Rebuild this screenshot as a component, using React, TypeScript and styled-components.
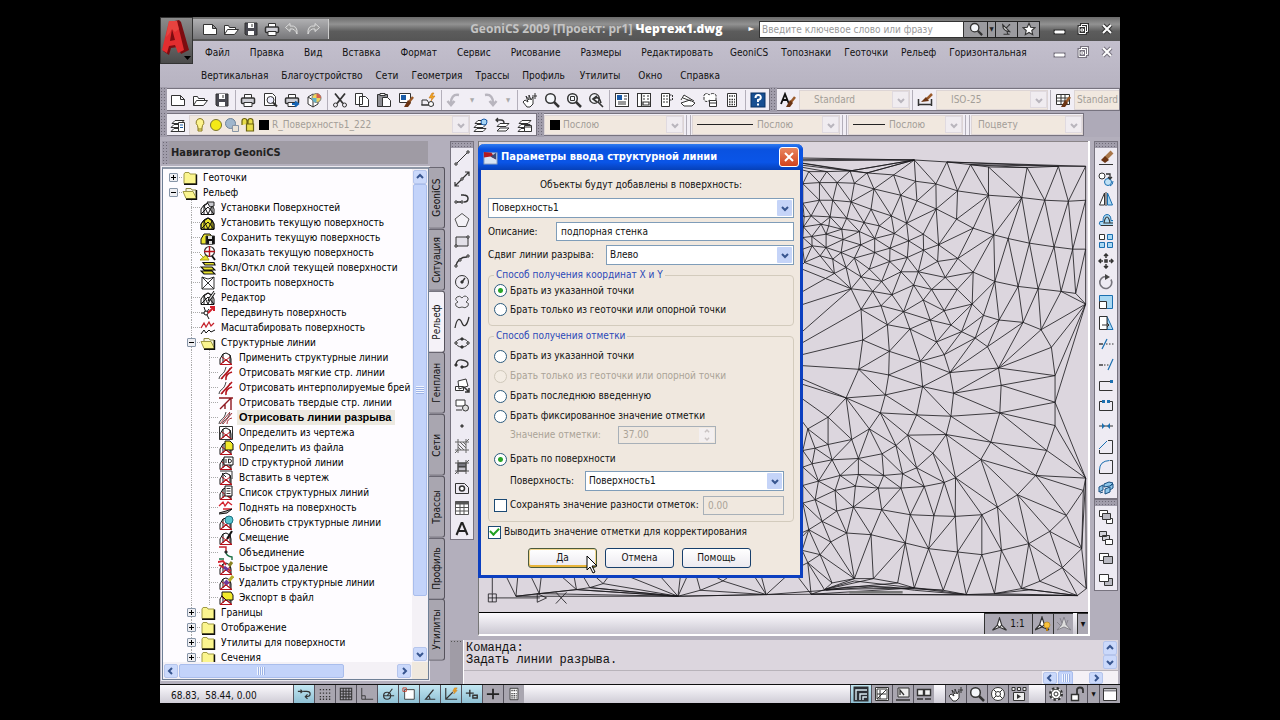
import React, { useState } from "react";
import type { ReactNode } from "react";
import styled, { createGlobalStyle, css } from "styled-components";

const ui = `"DejaVu Sans Condensed", "DejaVu Sans", sans-serif`;

const Global = createGlobalStyle`
  * { box-sizing: border-box; }
  html, body { margin: 0; background: #000; }
  body { font: 10px/14px ${ui}; color: #111; }
  button, input, select { font: inherit; color: inherit; margin: 0; padding: 0; border-radius: 0; }
`;

/* ---------- icons, all on a 16 x 16 grid ---------- */

const surf = <path d="M1 14.500V9L4 5l4-2 4 2 2 4v5.500zM4 14V6l4 8 4-8v8M4 6l4-3 4 3M1 14l7-7 6 7" stroke="#111" />;
const surfRed = (
  <>
    <path d="M2 14.500V9l3-5 3-1 4 2 1 4v5.500M5 13V4M12 13V5" stroke="#111" />
    <path d="M2 14.500h12l-6-5zM4 7l9 7M12 7l-9 7" stroke="#b5121b" />
  </>
);
const page = <path d="M1.500 3.500h9l4 4v6h-13zM10.500 3.500v4h4" fill="#fff" />;
const folderOpen = <path d="M1.500 13.500v-9h4l1 2h6v2M1.500 13.500l3-5h11l-4 5z" fill="#fff" />;
const floppy = (
  <>
    <path d="M2 2h12v12H3l-1-1z" fill="#4a4a52" />
    <path d="M5 2h6v5H5zM5 10h6v4H5z" fill="#fff" stroke="none" />
    <path d="M9 3v3" />
  </>
);
const printer = (
  <>
    <path d="M4.500 6V2.500h7V6" fill="#fff" />
    <rect x="1.500" y="6" width="13" height="5.500" rx="1" fill="#cfcfd6" strokeWidth="1.500" />
    <path d="M4 10.500h8v4H4z" fill="#fff" />
  </>
);
const lens = (
  <>
    <circle cx="6.500" cy="6.500" r="4.800" fill="#f4f6fa" strokeWidth="1.500" />
    <path d="M10 10l5 5" strokeWidth="2.500" />
  </>
);
const layers = <path d="M5 3.500h9l-3 3H2zM4 7.500h9l-3 3H1zM4 11.500h9l-3 3H1z" fill="#fff" />;
const brush = (
  <>
    <path d="M15 5l-4 5" stroke="#9a5a2a" strokeWidth="2.500" />
    <path d="M10 8l3 3-3 4-4 0z" fill="#6b3414" stroke="none" />
  </>
);
const hand = <path d="M3 8l3 2-2-6 3 4V3l2 5 2-3v7l-3 3H5L1 10zM10 4h5M13 1v6" fill="#fff" />;
const nodes = (x1: number, y1: number, x2: number, y2: number) => (
  <path d={`M${x1 - 1} ${y1 - 1}h2v2h-2zM${x2 - 1} ${y2 - 1}h2v2h-2z`} fill="#fff" />
);
const contours = <path d="M1 14c1-6 5-3 7-12M4 14c2-5 5-3 8-11" stroke="#111" strokeWidth=".8" />;

const glyphs: Record<string, ReactNode> = {
  new: page,
  open: folderOpen,
  save: floppy,
  print: printer,
  undo: <path d="M6 2.500L1.500 6.500 6 10.500V8q5-1 7 5 1-9-7-8z" fill="#999" stroke="#ddd" />,
  redo: <path d="M10 2.500l4.500 4-4.500 4V8q-5-1-7 5-1-9 7-8z" fill="#999" stroke="#ddd" />,
  preview: <><path d="M2.500 1.500h8l3 3v9h-11z" fill="#fff" /><circle cx="8.500" cy="8" r="3.500" fill="#eef" /><path d="M11 10.500l4 4" strokeWidth="2" /></>,
  publish: <>{printer}<path d="M8 12h5M11 9.500l3 2.500-3 2.500" stroke="#1565b5" strokeWidth="2" /></>,
  dwf: <><path d="M2 5l5-3 5 3v7l-5 3-5-3zM2 5l5 3v7" fill="#fff" /><circle cx="10.500" cy="6" r="4.500" fill="#ecd55e" stroke="#777" /><path d="M10.500 1.500A4.500 4.500 0 0115 6h-4.500z" fill="#d6604f" stroke="none" /><path d="M10.500 6v4.500A4.500 4.500 0 016 6z" fill="#62b1c9" stroke="none" /></>,
  cut: <><path d="M3 1.500l8 10M13 1.500l-8 10" strokeWidth="1.800" /><circle cx="3.500" cy="13" r="2" /><circle cx="12.500" cy="13" r="2" /></>,
  copy: <path d="M1.500 1.500h7v11h-7zM5.500 4.500h6l3 3v7h-9z" fill="#fff" />,
  paste: <><path d="M1.500 2.500h10v12h-10z" fill="#8c8c92" /><path d="M4 1.500h5v2H4z" fill="#fff" /><path d="M6.500 5.500h5l3 3v6h-8z" fill="#fff" /></>,
  match: <><path d="M1.500 1.500h11v9h-11z" fill="#fff" /><path d="M3 3h5v5H3z" fill="#1b5ca8" stroke="none" />{brush}</>,
  block: <><path d="M2 13V8h5l3 5zM1 13h13" /><circle cx="11" cy="12" r="2.500" fill="#fff" /><path d="M12 1l-3 5h3l-1 3 4-5h-3l2-3z" fill="#f0a520" stroke="#c9771a" strokeWidth=".6" /></>,
  arcL: <path d="M13 3C7 2 5 6 5 11M1.500 9L5 13l3.500-4" stroke="#b8b5be" strokeWidth="2.500" />,
  arcR: <path d="M3 3c6-1 8 3 8 8M7.500 9l3.500 4 3.500-4" stroke="#b8b5be" strokeWidth="2.500" />,
  pan: hand,
  zoom: lens,
  zoomWin: <>{lens}<path d="M4.500 4.500h4v4h-4z" /></>,
  zoomPrev: <><circle cx="6.500" cy="6.500" r="4.800" fill="#f4f6fa" strokeWidth="1.300" /><path d="M6 7q5-4 7 4M9 4L5 7l4 3M10 10l5 5" strokeWidth="1.600" /></>,
  props: <><rect x="1.500" y="1.500" width="13" height="13" fill="#fff" /><path d="M3 3h5v5H3z" fill="#1b5ca8" stroke="none" /><path d="M10 4h3M10 7h3M4 10h8M4 12h8" /></>,
  center: <><rect x="1.500" y="1.500" width="13" height="13" fill="#fff" /><path d="M5.500 2v12M7 4h2M11 4h2M7 7h2M11 7h2M7 10h6v3H7z" strokeWidth="1.200" /></>,
  palettes: <><path d="M3.500 1.500h8v13h-8z" fill="#fff" /><path d="M5 4h5M5 7h5M5 10h5M11.500 3h3v5h-3" strokeDasharray="2 1" /></>,
  sheetset: <path d="M1 11l9-3 5 3-3 3H4zM1 8l3-5 10 6M3 6l8 3" fill="#fff" />,
  markup: <><path d="M2 3q3-3 5 0 4-3 7 0v5q-4 3-6 0-4 3-6 0z" fill="#fff" strokeDasharray="3 1" /><path d="M7.500 8.500h7v6h-7zM7 11h8" fill="#fff" /></>,
  calc: <><path d="M3.500 1.500h9v13h-9z" fill="#fff" /><path d="M5 4h6M5 7.500h6M5 10h6M5 12.500h6" strokeDasharray="1.500 1" strokeWidth="1.500" /></>,
  help: <><rect x="1" y="1" width="14" height="14" fill="#174f92" stroke="#0b3266" /><path d="M5.500 6q0-3 2.700-3t2.600 2.500Q10.800 7.500 8 8v2M8 11.500v2" stroke="#fff" strokeWidth="2" /></>,
  textStyle: <><path d="M1 12L5 2l4 10M3 8h5" stroke="#111" strokeWidth="1.800" />{brush}</>,
  dimStyle: <><path d="M1.500 7v7M14.500 7v7M2 12.500h12" strokeWidth="1.500" /><path d="M15 2l-5 5" stroke="#9a5a2a" strokeWidth="2.500" /><path d="M9 5l3 4-8 1z" fill="#6b3414" stroke="none" /></>,
  tableStyle: <><path d="M1.500 2.500h13v10h-13zM1.500 6h13M1.500 9h13M6 3v9M10 3v9" fill="#fff" />{brush}</>,
  layerProps: <>{layers}<path d="M8.500 5.500h6v9h-6z" fill="#fff" /><path d="M10 8h3M10 10.500h3" stroke="#1b5ca8" /></>,
  bulb: <path d="M8 1.500a4 4 0 00-2.500 7L6 11v3h4v-3l.500-2.500A4 4 0 008 1.500zM6 12h4" fill="#fdf38c" stroke="#8a7a20" />,
  sun: <circle cx="8" cy="8" r="5.500" fill="#f4ea16" stroke="#7a7430" />,
  freeze: <><circle cx="6.500" cy="6.500" r="5" fill="#9fb6cc" stroke="#6c8299" /><path d="M8.500 8.500h6v6h-6z" fill="#e9e2d6" stroke="#8895a5" /></>,
  lock: <path d="M2 8V4a2.500 2.500 0 015 0v3M6.500 7h7v7h-7zM8 7V4a2.500 2.500 0 015 0v3" fill="#e8dc4a" stroke="#6a6312" strokeWidth="1.200" />,
  black: <path d="M3 3h10v10H3z" fill="#000" stroke="none" />,
  layerCur: <>{layers}<circle cx="11" cy="5" r="3" fill="#a7d4f3" stroke="#1b5ca8" /></>,
  layerPrev: <><path d="M5 6.500h9l-3 3H2zM5 11h9l-3 3H2z" fill="#fff" /><path d="M1 3h5q3 0 3 3M3 1L1 3l2 2" strokeWidth="1.300" /></>,
  layerState: <>{layers}<path d="M7.500 8.500h7v6h-7zM7.500 10h7" fill="#fff" /></>,

  line: <><path d="M2 14L14 2" />{nodes(2, 14, 14, 2)}</>,
  xline: <><path d="M1 15L15 1M15 5V1h-4M1 11v4h4" strokeWidth="1.200" /><path d="M7 7h2v2H7z" fill="#fff" /></>,
  pline: <><path d="M2 11h7M9 4q5 0 5 3.500T10 11M7 4h3" strokeWidth="1.500" />{nodes(2, 11, 8, 11)}</>,
  polygon: <path d="M8 1.500L15 7l-3 7.500H4L1 7z" fill="#f3f1f6" stroke="#555" />,
  rect: <><path d="M2 4h12v9H2z" fill="#e2e0e8" />{nodes(2, 13, 14, 4)}</>,
  arc: <><path d="M2 13q2-9 11-9" strokeWidth="1.300" />{nodes(2, 13, 14, 3)}<path d="M5 6h2v2H5z" fill="#fff" /></>,
  circle: <><circle cx="8" cy="8" r="6.500" /><path d="M8 8l3-4" strokeWidth="1.400" /><path d="M7 7h2v2H7z" fill="#333" /></>,
  cloud: <path d="M8 4q3-4 6 0 1 2-2 4 4 1 2 4-3 3-6 1-3 2-6-1-2-3 2-4-4-3-1-5 3-2 5 1z" stroke="#555" />,
  spline: <path d="M1 13C3 2 6 3 8 8s5 3 7-6" strokeWidth="1.300" />,
  ellipse: <><ellipse cx="8" cy="8" rx="6" ry="4" />{nodes(2, 8, 14, 8)}<path d="M7 3h2v2H7zM7 11h2v2H7z" fill="#333" /></>,
  ellArc: <><path d="M2 8q1-5 6-4 6 1 6 4t-5 3" strokeWidth="1.400" /><path d="M7 10h2v2H7zM1 8h2v2H1z" fill="#333" /></>,
  insert: <><path d="M4 4l8-2 2 7-9 3zM1.500 9.500h8v4h-8z" fill="#fff" /><path d="M10 10l5 5M15 11v4h-4" strokeWidth="1.500" /></>,
  make: <><path d="M2 3h9v6H2z" fill="#fff" /><path d="M2 13h6" /><circle cx="11.500" cy="11" r="3" fill="#ddd" /></>,
  point: <path d="M7 7h2v2H7z" fill="#777" />,
  hatch: <path d="M1 4h14M1 12h14M4 1v14M12 1v14M4 6l6 6M4 9l3 3M6 4l6 6M9 4l3 3M15 1l-3 3M4 12l-3 3" stroke="#666" />,
  gradient: <><path d="M4 4h8v4H4z" fill="#77777f" /><path d="M4 8h8v4H4z" fill="#c4c2ca" /><path d="M1 4h14M1 12h14M4 1v14M12 1v14M15 1l-3 3M4 12l-3 3" stroke="#555" /></>,
  region: <><path d="M1.500 3.500h9l4 4v6h-13z" /><circle cx="8" cy="8.500" r="2.500" fill="#fff" strokeWidth="1.500" /></>,
  table: <><path d="M1.500 1.500h13v13h-13zM1.500 7.500h13M1.500 11h13M6 4v10M10 4v10" fill="#fff" stroke="#555" /><path d="M1 3h14" stroke="#555" strokeWidth="3" /></>,
  mtext: <path d="M2.500 14L7.500 2h1l5 12M4.500 10h7" stroke="#222" strokeWidth="2" />,

  erase: <><path d="M14 2L8 8" stroke="#a8764a" strokeWidth="4" /><path d="M7 6l4 4-4 3-4-3z" fill="#6b3414" stroke="none" /><path d="M1 14.500h14" /></>,
  copyObj: <><circle cx="4" cy="5" r="3" fill="#fff" /><circle cx="10" cy="11" r="3.500" fill="#bfe0f5" stroke="#1b6fb0" /><path d="M8 3h4v4M10 6l2 2 2-2" strokeWidth="1.300" /><path d="M15 10q0 4-3 5" stroke="#1b6fb0" /></>,
  mirror: <><path d="M6.500 2v12h-5zM8 1v14" fill="#fff" /><path d="M9.500 2v12h5z" fill="#a9d8f3" stroke="#1b6fb0" /></>,
  offset: <><path d="M15 13.500H3q-3-1-1-4h3q0-7 4-7t4 6h2" fill="#a9d8f3" stroke="#1b6fb0" /><path d="M15 11H6q1-6 3-6t3 6M3 13.500h12" strokeWidth="1.200" /></>,
  array: <><path d="M1.500 1.500h5v5h-5z" fill="#fff" /><path d="M9.500 1.500h5v5h-5zM1.500 9.500h5v5h-5zM9.500 9.500h5v5h-5z" fill="#a9d8f3" stroke="#1b6fb0" /></>,
  move: <path d="M8 1v4M8 11v4M1 8h4M11 8h4M6 3l2-2 2 2M6 13l2 2 2-2M3 6L1 8l2 2M13 6l2 2-2 2M7 7h2v2H7z" strokeWidth="1.500" />,
  rotate: <><path d="M8 2.500a6 6 0 105 3" stroke="#77757d" strokeWidth="1.600" /><path d="M7 0l5 3-5 3z" fill="#444" stroke="none" /></>,
  scale: <><path d="M1.500 1.500h13v13h-13z" fill="#a9d8f3" stroke="#1b6fb0" /><path d="M1.500 7.500h7v7h-7z" fill="#fff" /></>,
  stretch: <><path d="M9 1.500l6 13H9z" fill="#a9d8f3" stroke="#1b6fb0" /><path d="M1.500 1.500H9v13H1.500zM4 10h7M9 8l2 2-2 2" fill="#fff" /></>,
  trim: <><path d="M1 8h4" strokeWidth="1.400" /><path d="M8 8h8" strokeDasharray="1.500 1.500" /><path d="M4 13l5-10" stroke="#1b6fb0" strokeWidth="1.200" /></>,
  extend: <><path d="M1 9h4" strokeWidth="1.400" /><path d="M6 9h5" strokeDasharray="1.500 1.500" /><path d="M10 14l5-11" stroke="#1b6fb0" strokeWidth="1.200" /></>,
  breakPt: <><path d="M1.500 13.500v-9h11M1.500 13.500h13" /><path d="M12 3h3v3h-3z" fill="#1b6fb0" stroke="none" /></>,
  breakAt: <><path d="M4 4.500H1.500v9h13v-9H12" /><path d="M4 3h3v3H4zM9 3h3v3H9z" fill="#1b6fb0" stroke="none" /></>,
  join: <><path d="M1 8h14" /><path d="M4 5l3 3-3 3zM12 5L9 8l3 3z" fill="#1b6fb0" stroke="none" /></>,
  chamfer: <><path d="M1.500 11v3.500h13v-13H10" /><path d="M1 10l8-8" stroke="#1b6fb0" /></>,
  fillet: <><path d="M1.500 11v3.500h13v-13H12" /><path d="M1.500 11q0-9 10-9.500" stroke="#1b6fb0" /></>,
  explode: <path d="M1 7l4-2v5l-4 2zM6 4l5-2 4 1-3 3-6 1zM7 9l5-2v5l-5 2zM2 13l3-1M12 6l3-2v4l-3 2" fill="#8cc5ea" stroke="#174f80" />,
  order1: <><path d="M1.500 1.500h8v6h-8zM8.500 9.500h6v5h-6z" fill="#fff" /><path d="M4.500 4.500h8v6h-8z" fill="#b9b9c1" /></>,
  order2: <><path d="M1.500 1.500h7v5h-7zM4.500 5.500h7v5h-7z" fill="#d2d2d8" /><path d="M7.500 9.500h7v5h-7z" fill="#fff" /></>,
  order3: <><path d="M1.500 2.500h9v7h-9z" fill="#fff" /><path d="M5.500 5.500h9v7h-9z" fill="#b9b9c1" /></>,
  order4: <><path d="M6.500 6.500h8v7h-8z" fill="#b9b9c1" /><path d="M1.500 2.500h9v7h-9z" fill="#fff" /></>,

  infer: <path d="M1 5h5M4 3l2 2-2 2M7 5h4q4 0 4 3t-5 3M12 8.500L9.500 11l2.500 2.500" strokeWidth="1.400" />,
  snap: <path d="M2 3h12M2 7h12M2 11h12M2 14h12" strokeDasharray="1.500 2" strokeWidth="1.500" />,
  grid: <path d="M1.500 1.500h13v13h-13zM4.800 2v12M8 2v12M11.300 2v12M2 4.800h12M2 8h12M2 11.300h12" strokeWidth="1.200" />,
  ortho: <path d="M2 1v13h13M2 10h4v4" />,
  polar: <><circle cx="7" cy="10" r="4" strokeWidth="1.400" /><path d="M3 10h12M7 10l6-8" strokeWidth="1.300" /></>,
  osnap: <><path d="M3 3h11v11H3z" fill="#fff" /><path d="M1 1h4v4H1z" stroke="#c23b2c" /></>,
  otrack: <path d="M14 14H3L12 3M8 14q0-3-2-4" strokeWidth="1.400" />,
  ducs: <><path d="M2 1v13h13M2 14L10 6" strokeWidth="1.300" /><path d="M12 1l-2 4h2l-1 3 4-4h-2l2-3z" fill="#f0a520" stroke="#c9771a" strokeWidth=".6" /></>,
  dyn: <path d="M1 7h9M5.500 3v8M9 9.500h5v3H9z" strokeWidth="1.600" />,
  lwt: <path d="M8 2v12M1 8h14M4 8h8" strokeWidth="2" stroke="#222" />,
  model: <><rect x="1" y="1" width="14" height="14" fill="#2a2f36" /><path d="M3 14V4h11M7 14V8h7M10 14v-3h4" stroke="#d8e9f0" strokeWidth="1.400" /></>,
  layout: <><path d="M1.500 1.500h13v13h-13z" fill="#fff" /><path d="M3 3h10v10H3zM3 13L12 4M6 4v9M3 8h9" /></>,
  layout2: <><path d="M3 2h11v9H3z" fill="#eee" /><path d="M5 9V4l4 5M1 14h14" strokeWidth="1.300" /></>,
  quick: <path d="M1.500 3.500h6v6h-6zM8.500 3.500h6v6h-6zM1 13h6M9 13h6" fill="#f3f3f3" strokeWidth="1.400" />,
  wheel: <><circle cx="8" cy="8" r="6.500" fill="#fff" /><circle cx="8" cy="8" r="2.500" /><path d="M3.500 3.500L6 6M12.500 3.500L10 6M3.500 12.500L6 10M12.500 12.500L10 10" /></>,
  motion: <><path d="M1 1.500h3v3H1zM6.500 1.500h3v3h-3zM12 1.500h3v3h-3zM2.500 6.500h11v8h-11z" fill="#eee" /><path d="M6 8v5l4-2.500z" fill="#333" stroke="none" /></>,
  gear: <><circle cx="8" cy="8" r="6" fill="#fff" strokeWidth="2" strokeDasharray="2.400 2.300" /><circle cx="8" cy="8" r="4.800" fill="#fff" /><circle cx="8" cy="8" r="2" /></>,
  unlock: <><path d="M2.500 8.500h7v6h-7z" fill="#fff" strokeWidth="1.400" /><path d="M8 8V4q0-2.500 3-2.500T14 4v3" strokeWidth="1.800" /></>,
  clean: <><path d="M1.500 2.500h13v12h-13z" fill="#fff" /><path d="M2 4.500h12" strokeWidth="2" stroke="#88878e" /></>,
  anno: <path d="M8 1L5.500 9l-5 5 7.500-3 7.500 3-5-5zM6 9l2 2 2-2" fill="#fff" strokeWidth="1.200" />,
  annoLit: <><path d="M7 1L4.500 9 0 14l7-3 7 3-4.500-5zM5 9l2 2 2-2" fill="#fff" strokeWidth="1.200" /><circle cx="12" cy="9" r="3" fill="#f8c23c" stroke="#b77d10" strokeWidth=".6" /><path d="M12 12v3" stroke="#b77d10" strokeWidth="2" /></>,
  annoOff: <path d="M8 1L5.500 9 1 14l7-3 7 3-4.500-5zM4 2l2 5M12 4l-2 5M1 6l4 4" fill="#ddd" stroke="#86848c" />,
  sat: <path d="M3 3q0 7 8 8zM7 7l4-4M10 3h1v1M4 14h7M8 11l1 3" fill="#eee" strokeWidth="1.200" />,
  star: <path d="M8 1.500l2 4.500 4.800.5-3.600 3.200 1 4.800L8 12l-4.200 2.500 1-4.800L1.200 6.500 6 6z" fill="#fff" strokeWidth="1.300" />,

  folder: <><path d="M2 13.500V4l1-1.500h4L8 4h6v9.500z" fill="#fbf58f" stroke="#a09a45" /><path d="M2 14.200h12.500V4.500" stroke="#111" strokeWidth="1.400" /></>,
  folderOpen: <><path d="M4 13V3.500h5l1 1.500h4v8z" fill="#f4f3df" stroke="#8a8540" /><path d="M1 6.500h10l3.500 7H4z" fill="#fbf58f" stroke="#a09a45" /><path d="M4 14.200h10.500V5" stroke="#111" strokeWidth="1.400" /></>,
  tSettings: <>{surf}<path d="M7 2h7v4l-4 1z" fill="#c9c9cf" stroke="#222" /></>,
  tSet: <><path d="M1 14V9l3-4 4-2 4 2 2 4v5z" fill="#e9e22e" />{surf}</>,
  tSave: <><path d="M1 14V9l3-5h6l3 4v6z" fill="#e9e22e" stroke="#111" /><path d="M6 6h8.500v8H6z" fill="#111" /><path d="M8 6h4v3H8zM9 11h3v3H9z" fill="#ddd" stroke="none" /></>,
  tShow: <><path d="M0 15l6-5 3 5zM0 9l4 4" fill="#e9e22e" stroke="#a8a11c" /><circle cx="9.500" cy="6.500" r="5" fill="#fff" stroke="#333" strokeWidth="1.200" /><path d="M9.500 1v11M4 6.500h11" stroke="#b5121b" strokeWidth="1.400" /><path d="M12 11l3 4" stroke="#111" strokeWidth="1.800" /></>,
  tLayer: <path d="M3 2.500h11l1 2.500H5zM1 7h11l3 3H4zM1 11h11l3 3H4z" fill="#e9e22e" stroke="#111" strokeWidth="1.200" />,
  tBuild: <path d="M2 2l12 12M14 2L2 14M2 2v12h12V2M2 2l6 2 6-2" stroke="#333" />,
  tEdit: <>{surf}<path d="M14 1l-5 7-1 3 3-2 4-6" fill="#ddd" stroke="#111" /></>,
  tMove: <><path d="M1 8h5l3 6M6 8L4 2M6 8l3-4" stroke="#111" /><circle cx="6" cy="8" r="2" fill="#fff" stroke="#111" /><path d="M8 8l6-6M10 2h4v4" stroke="#d3202c" strokeWidth="2" /></>,
  tScale: <><path d="M1 8l3-5 2 4 3-5 2 4 3-3" stroke="#c5202b" strokeWidth="1.300" /><path d="M1 14l3-4 2 3 3-3 2 2 4-2" stroke="#111" /></>,
  sApply: surfRed,
  sSoft: <>{contours}<path d="M3 14L14 2M8 15q-1-6 6-8" stroke="#b5121b" strokeWidth="1.600" /></>,
  sHard: <path d="M1 3h14M13 3v12M2 14L13 3M7 14V9" stroke="#8e1820" strokeWidth="1.400" />,
  sBreak: <>{contours}<path d="M5 14L14 3M2 14L12 2M9 14q0-5 5-6" stroke="#a33139" /></>,
  sDraw: <>{surfRed}<path d="M1.500 1.500h13v13h-13z" /></>,
  sFile: <>{surfRed}<path d="M7 1h5l3 3v6H7z" fill="#f2e92b" stroke="#111" /></>,
  sId: <>{surfRed}<path d="M6 2h9v8H6z" fill="#fff" stroke="#111" /><path d="M8 4v4M10.500 4v4q3 0 3-2t-3-2z" stroke="#222" /></>,
  sInsert: <>{surfRed}<path d="M2 1h12v8M4 3l4 4" stroke="#333" /></>,
  sList: <>{surfRed}<path d="M7 1h7v10H7z" fill="#fff" stroke="#111" /><path d="M8.500 3.500h4M8.500 6h4M8.500 8.500h4" stroke="#333" /></>,
  sRaise: <><path d="M1 6l4-4 2 4 3-4 4 3M5 9h9" stroke="#d3202c" strokeWidth="1.300" /><path d="M1 13l7-2 6-2-5 4-8 1" fill="#bbb" stroke="#111" /></>,
  sUpdate: <>{surfRed}<circle cx="11" cy="5" r="4" fill="#57c4d0" stroke="#1c7080" /></>,
  sShift: <>{surfRed}<path d="M14 1L9 9" stroke="#111" strokeWidth="2" /></>,
  sJoin: <><path d="M1 2h7v5" stroke="#c5202b" strokeWidth="1.400" /><path d="M1 14h5M8 7q0 4 6 5v3" stroke="#197044" strokeWidth="1.400" /><path d="M7 6h2v2H7z" fill="#111" /></>,
  sQuick: <>{surfRed}<path d="M0 2l5-1 3 4M1 5l12 6" stroke="#d3202c" strokeWidth="1.800" /><path d="M14 2l-3 4" stroke="#8a8222" strokeWidth="3" /><path d="M6 7l4 3" stroke="#6c3a9a" strokeWidth="3" /></>,
  sDelete: <>{surfRed}<path d="M15 1l-4 5" stroke="#b7ad2b" strokeWidth="3" /><path d="M7 6l3 3" stroke="#6c3a9a" strokeWidth="4" /></>,
  sExport: <>{surfRed}<path d="M4 2h9l2 3v5H8L4 6z" fill="#f2e92b" stroke="#111" /></>,
  win: <><rect x="1" y="3" width="14" height="12" fill="#d8e4f4" stroke="#7e96bc" /><path d="M1 2l8 1 5 7-6-3-7 1z" fill="#b11a22" stroke="none" /><path d="M8 7l6 3V3z" fill="#3a4a74" stroke="none" /></>,
};

const Svg = styled.svg`display: block; flex: none;`;
const Icon = ({ name, size = 16 }: { name: string; size?: number }) => (
  <Svg width={size} height={size} viewBox="0 0 16 16" fill="none" stroke="#333" aria-hidden="true">
    {glyphs[name]}
  </Svg>
);

const chevrons = { up: "M2 6l3-3 3 3", down: "M2 4l3 3 3-3", left: "M6 2L3 5l3 3", right: "M4 2l3 3-3 3" };
const Chevron = ({ dir, color = "#37558f" }: { dir: keyof typeof chevrons; color?: string }) => (
  <Svg width="10" height="10" viewBox="0 0 10 10" fill="none" stroke={color} strokeWidth="2" aria-hidden="true">
    <path d={chevrons[dir]} />
  </Svg>
);

/* ---------- frame ---------- */

const Page = styled.div`
  min-height: 100vh; padding: 17px 0; display: flex; justify-content: center; background: #000;
`;
const Window = styled.main`
  width: 75%; display: flex; flex-direction: column; overflow: hidden; background: #b3afbc;
`;
const Header = styled.header`
  display: grid; grid-template-columns: 33px minmax(0, 1fr); height: 70px; flex: none;
  background: linear-gradient(#c9c5d3, #b7b3c1);
`;
const AppButton = styled.button`
  height: 47px; border: 1px solid #333; background: linear-gradient(#8b8b8b, #4b4b4b); display: grid; place-items: center;
`;
const TitleBar = styled.div`
  height: 24px; display: flex; align-items: center; color: #fff;
  background: linear-gradient(#6a6a6a, #929292 30%, #5c5c5c 60%, #555);
`;
const QuickBar = styled.div`
  display: flex; align-items: center; justify-content: space-between; width: 136px; height: 20px; padding: 0 7px 0 9px;
  background: linear-gradient(#b0b0b2, #77777a); border-right: 1px solid #ccc;
`;
const PlainButton = styled.button<{ $w?: number }>`
  border: 0; background: none; display: grid; place-items: center; width: ${(p) => (p.$w ? p.$w + "px" : "auto")};
`;
const Title = styled.h1`
  margin: 0; flex: 1; text-align: right; font: 700 12px/20px "Open Sans", "Noto Sans", sans-serif; color: #c4c4c4; white-space: nowrap;
  b { color: #fff; }
`;
const SearchArrow = styled.span`padding: 0 5px 0 26px; font-size: 8px;`;
const Search = styled.input`
  width: 205px; height: 17px; border: 1px solid #333; background: #fff; padding: 0 2px;
  &::placeholder { color: #999; opacity: 1; }
`;
const SearchButton = styled.button<{ $w: number }>`
  width: ${(p) => p.$w}px; height: 17px; border: 1px solid #222; border-left: 0; background: #9b9b9f;
  display: grid; place-items: center; font-size: 6px; color: #222;
`;
const WinControls = styled.div`
  display: flex; align-items: center; gap: 10px; margin-left: auto; padding-right: 6px; padding-left: 12px;
`;
const MenuRow = styled.nav<{ $start: number }>`
  display: flex; align-items: center; height: 23px; padding-left: ${(p) => p.$start}px;
`;
const MenuGroup = styled.div<{ $gap: number; $after?: number }>`
  display: flex; gap: ${(p) => p.$gap}px; margin-right: ${(p) => p.$after ?? 0}px;
`;
const MenuItem = styled.button`border: 0; background: none; white-space: nowrap;`;

const ToolRow = styled.div`
  display: flex; align-items: center; height: 25px; flex: none; overflow: hidden; background: #aeaab8;
`;
const ToolStrip = styled.div<{ $grow?: boolean }>`
  display: flex; align-items: center; height: 23px; background: #f1eef5; border: 1px solid #77737f; border-left: 0;
  ${(p) => p.$grow && css`flex: 1; overflow: hidden;`}
`;
const Handle = styled.span<{ $across?: boolean }>`
  flex: none; background-color: #a19dab;
  background-image: radial-gradient(#6f6b78 1px, transparent 1px); background-size: 3px 3px;
  ${(p) => (p.$across ? css`height: 6px; width: 100%;` : css`width: 7px; height: 100%;`)}
`;
const ToolButton = styled.button`
  width: 22px; height: 21px; flex: none; border: 0; background: none; display: grid; place-items: center;
`;
const Drop = styled.button`
  width: 14px; flex: none; border: 0; background: none; font-size: 6px; color: #aaa;
`;
const Sep = styled.span`width: 1px; height: 20px; margin: 0 1px 0 2px; background: #b3afba; flex: none;`;

const FlatBox = styled.label<{ $w: number }>`
  display: flex; align-items: center; height: 20px; width: ${(p) => p.$w}px; flex: none; padding-left: 2px;
  background: #f1e8df; border: 1px solid #ddd5d5; color: #a39e98;
`;
const FlatSelect = styled.select<{ $indent: number }>`
  flex: 1; min-width: 0; height: 18px; appearance: none; border: 0; background: none; padding-left: ${(p) => p.$indent}px; opacity: 1; color: #a39e98;
`;
const FlatArrow = styled.span`
  width: 17px; height: 17px; display: grid; place-items: center; background: #f0ecf0; border: 1px solid #e0dae0;
`;
const LineSample = styled.span<{ $w: number }>`width: ${(p) => p.$w}px; height: 1px; background: #222; margin-left: 2px;`;

const FlatCombo = ({ w, text, indent = 4, label, children }: { w: number; text: string; indent?: number; label: string; children?: ReactNode }) => (
  <FlatBox $w={w}>
    {children}
    <FlatSelect $indent={indent} aria-label={label}><option>{text}</option></FlatSelect>
    <FlatArrow><Chevron dir="down" color="#b9b5bd" /></FlatArrow>
  </FlatBox>
);

/* ---------- navigator ---------- */

const Body = styled.div`flex: 1; min-height: 0; display: flex;`;
const Navigator = styled.aside`width: 285px; flex: none; display: flex; flex-direction: column; padding: 4px 0 4px 2px;`;
const NavTitle = styled.h2`
  margin: 0 17px 0 0; height: 23px; background: #9f9ba4; display: flex; align-items: center; gap: 2px;
  font-size: 11px; line-height: 16px; color: #222;
`;
const NavRow = styled.div`flex: 1; min-height: 0; display: flex; margin-top: 3px;`;
const TreePanel = styled.div`
  flex: 1; min-width: 0; display: grid; grid-template: minmax(0, 1fr) 17px / minmax(0, 1fr) 16px;
  background: #fefcff; border: 1px solid #6f7f96; border-top: 2px solid #8e97a6; outline: 1px solid #eceaf0;
`;
const Tree = styled.div`overflow: hidden; height: 0; min-height: 100%; padding: 1px 0 0 1px;`;
const TreeRow = styled.div`display: flex; align-items: center; height: 15px; white-space: nowrap;`;
const Branch = styled.span<{ $line?: boolean; $tick?: boolean }>`
  width: 18px; height: 15px; flex: none; display: grid; place-items: center;
  background-image:
    ${(p) => (p.$line ? "repeating-linear-gradient(#aaa 0 1px, transparent 1px 2px)" : "linear-gradient(transparent, transparent)")},
    ${(p) => (p.$tick ? "repeating-linear-gradient(90deg, #aaa 0 1px, transparent 1px 2px)" : "linear-gradient(transparent, transparent)")};
  background-size: 1px 100%, 9px 1px;
  background-position: 9px 0, 9px 7px;
  background-repeat: no-repeat;
`;
const Expander = styled.button`
  width: 9px; height: 9px; border: 1px solid #8795a8; border-radius: 1px; background: #eeeef2; display: grid; place-items: center;
`;
const TreeLabel = styled.span<{ $active?: boolean }>`
  margin-left: 3px; padding: 0 4px 0 2px; line-height: 15px; color: #000;
  ${(p) => p.$active && css`font: 700 11px/15px "Liberation Sans", Arial, sans-serif; background: #ece9e0;`}
`;
const VScroll = styled.div`display: flex; flex-direction: column; align-items: center; background: #f4f1f6; padding: 1px 0;`;
const HScroll = styled.div`display: flex; align-items: center; background: #f4f1f6; padding: 0 1px; gap: 1px;`;
const ScrollButton = styled.button<{ $w?: number; $h?: number }>`
  width: ${(p) => p.$w ?? 14}px; height: ${(p) => p.$h ?? 14}px; flex: none; border: 1px solid #b5c5ec; border-radius: 2px; background: #cbd9fb;
  display: grid; place-items: center;
`;
const Thumb = styled.span<{ $v?: boolean; $grow?: number }>`
  flex: ${(p) => p.$grow ?? 1}; display: grid; place-items: center; border: 1px solid #a9bdec; border-radius: 2px; background: #c3d3fa;
  ${(p) => (p.$v ? css`width: 14px;` : css`height: 14px;`)}
  &::after {
    content: ""; width: 8px; height: 8px;
    background: repeating-linear-gradient(${(p) => (p.$v ? "180deg" : "90deg")}, #f2f6ff 0 1px, #9db3e6 1px 2px);
  }
`;
const Space = styled.span<{ $grow: number }>`flex: ${(p) => p.$grow};`;
const Corner = styled.span`background: #efe8dd;`;
const SideTabs = styled.div`width: 16px; flex: none; display: flex; flex-direction: column; margin-bottom: 19px;`;
const SideTab = styled.button<{ $active?: boolean }>`
  flex: 1; writing-mode: vertical-rl; transform: rotate(180deg); border: 1px solid #55525c; border-right: 0; border-radius: 3px 0 0 3px;
  background: ${(p) => (p.$active ? "#f5f2f8" : "#a9a6b0")}; text-align: center; line-height: 14px;
`;

/* ---------- drawing area ---------- */

const Work = styled.div`flex: 1; min-width: 0; display: flex; flex-direction: column; padding-left: 5px;`;
const WorkTop = styled.div`flex: 1; min-height: 0; display: flex; gap: 4px; padding-top: 4px;`;
const VTools = styled.div<{ $h: number }>`
  width: 24px; height: ${(p) => p.$h}px; flex: none; display: flex; flex-direction: column; background: #eeebf3; border: 1px solid #77737f;
`;
const VTool = styled.button`flex: 1; min-height: 0; border: 0; background: none; display: grid; place-items: center;`;
const RightTools = styled.div`padding-right: 2px; flex: none;`;
const View = styled.section`
  position: relative; flex: 1; min-width: 0; display: flex; flex-direction: column; margin-bottom: 4px;
  border-right: 2px solid #fff; border-bottom: 2px solid #fff; border-left: 1px solid #777; background: #dcd6de;
`;
const Model = styled.svg`flex: 1; min-height: 0; width: 100%; display: block; border-top: 1px solid #8a8588;`;
const ViewBar = styled.div`
  height: 22px; border-top: 1px solid #000; background: linear-gradient(#fbf9fd, #cbc8d2);
  display: flex; justify-content: flex-end; flex: none;
`;
const ViewButton = styled.button<{ $w: number; $gap?: boolean }>`
  width: ${(p) => p.$w}px; border: 1px solid #333; border-width: 1px 0 0 1px; background: #aba8b3; display: flex; align-items: center; justify-content: center;
  gap: 3px; margin-left: ${(p) => (p.$gap ? 4 : 0)}px;
`;
const Command = styled.section`
  height: 44px; flex: none; display: grid; grid-template: 30px 14px / 14px minmax(0, 1fr) 17px; background: #dcd6de; margin-right: 2px;
  font: 12px/12px "Liberation Mono", "Courier New", monospace;
`;
const CommandGrip = styled.span`
  grid-row: span 2; background: #a09ca6 radial-gradient(#555 1px, transparent 1px) 0 0 / 3px 3px;
  background-repeat: repeat-x; border-right: 1px solid #fff;
`;
const CommandLog = styled.div`padding: 2px 2px 0; white-space: pre;`;
const CommandScroll = styled.div`display: flex; flex-direction: column; align-items: center; padding-top: 1px;`;
const CommandLine = styled.div`grid-column: span 2; display: flex; border-top: 1px solid #b8b3ba;`;
const CommandInput = styled.input`flex: 1; min-width: 0; border: 0; background: none;`;
const CommandHScroll = styled(HScroll)`width: 76px;`;

const Status = styled.footer`
  height: 19px; flex: none; display: flex; background: linear-gradient(#fbf9fd, #cfccd6); border-top: 1px solid #111;
`;
const Coords = styled.output`width: 133px; padding-left: 11px; line-height: 21px; white-space: pre;`;
const Group = styled.div<{ $push?: boolean; $gap?: number }>`
  display: flex; margin-left: ${(p) => (p.$push ? "auto" : (p.$gap ?? 0) + "px")};
`;
const StatusButton = styled.button<{ $on?: boolean; $w?: number }>`
  width: ${(p) => p.$w ?? 21}px; height: 18px; border: 0; border-left: 1px solid #55525c; font-size: 6px;
  background: ${(p) => (p.$on ? "linear-gradient(#c3e7f2, #8fc0d4)" : "#a9a6b0")}; display: grid; place-items: center;
`;

/* ---------- dialog ---------- */

const Dialog = styled.form`
  position: absolute; left: 0; top: 3px; width: 325px; margin-left: -1px; background: #f0e8df;
  border: 3px solid #0c3fc0; border-top: 0; border-radius: 6px 6px 0 0;
`;
const DialogTitle = styled.h2`
  margin: 0 -3px; height: 26px; padding: 0 4px 0 5px; display: flex; align-items: center; gap: 3px; border-radius: 6px 6px 0 0;
  color: #fff; font-size: 11px; line-height: 16px; background: linear-gradient(#2f7cf0, #0a52e0 20%, #0a55e8 70%, #0640b8);
`;
const CloseButton = styled.button`
  width: 20px; height: 20px; margin-left: auto; border: 1px solid #fff; border-radius: 3px; background: linear-gradient(#e9865f, #d2431d);
  display: grid; place-items: center;
`;
const DialogBody = styled.div`padding: 0 6px 7px 7px; display: flex; flex-direction: column;`;
const Caption = styled.label`height: 28px; line-height: 30px; text-align: center;`;
const Line = styled.div<{ $h: number; $top?: number; $left?: number }>`
  display: flex; align-items: center; height: ${(p) => p.$h}px; margin-top: ${(p) => p.$top ?? 0}px; padding-left: ${(p) => p.$left ?? 0}px;
`;
const FieldName = styled.label<{ $w: number; $off?: boolean }>`
  width: ${(p) => p.$w}px; flex: none; white-space: nowrap; color: ${(p) => (p.$off ? "#aaa397" : "#111")};
`;
const TextBox = styled.input<{ $w?: number }>`
  height: 19px; ${(p) => (p.$w ? css`width: ${p.$w}px;` : css`flex: 1; min-width: 0;`)}
  border: 1px solid #7f9db9; background: #fff; padding: 0 4px;
  &:disabled { background: #f0e8df; color: #aaa397; border-color: #a8b0b8; }
`;
const ComboBox = styled.span`
  display: grid; grid-template-columns: minmax(0, 1fr) 17px; flex: 1; height: 20px; border: 1px solid #7f9db9; background: #fff;
`;
const ComboSelect = styled.select`
  grid-area: 1 / 1 / 2 / 3; appearance: none; border: 0; background: none; padding-left: 3px; height: 18px;
`;
const ComboArrow = styled.span`
  grid-area: 1 / 2; margin: 1px; background: #c5d4f8; border-radius: 1px; display: grid; place-items: center; pointer-events: none;
`;
const FieldGroup = styled.fieldset`
  margin: 4px 0 0; padding: 0 9px 6px 5px; border: 1px solid #d3cbbd; border-radius: 4px; min-width: 0;
`;
const Legend = styled.legend`padding: 0 2px; height: 12px; line-height: 12px; color: #2c48b8;`;
const Choice = styled.label<{ $h: number; $off?: boolean }>`
  display: flex; align-items: center; gap: 3px; height: ${(p) => p.$h}px; white-space: nowrap; color: ${(p) => (p.$off ? "#aaa397" : "#111")};
`;
const Radio = styled.input`
  appearance: none; width: 13px; height: 13px; flex: none; border: 1px solid #2a5a7d; border-radius: 50%; background: #fff;
  &:checked { background: radial-gradient(#2ba52b 0 2px, #fff 3px); }
  &:disabled { border-color: #cfc8bb; background: #f3ece3; }
`;
const Check = styled.input`
  appearance: none; width: 13px; height: 13px; flex: none; border: 1px solid #1c4a74; background: #fff;
  display: grid; place-items: center;
  &:checked::after { content: ""; width: 7px; height: 4px; border: solid #21a121; border-width: 0 0 2px 2px; transform: rotate(-45deg) translate(1px, -1px); }
`;
const Spinner = styled.span`
  display: flex; width: 98px; height: 18px; border: 1px solid #a8b0b8;
`;
const SpinInput = styled.input`flex: 1; min-width: 0; border: 0; background: none; padding: 0 4px; color: #aaa397;`;
const SpinArrows = styled.span`
  width: 15px; margin: 1px; display: flex; flex-direction: column; align-items: center; justify-content: center; background: #f3eff0;
  svg { height: 7px; }
`;
const Actions = styled.div`display: flex; gap: 8px; margin-top: 6px; padding-left: 40px;`;
const Action = styled.button<{ $main?: boolean }>`
  width: 69px; height: 20px; border: 1px solid #173f6c; border-radius: 3px; background: linear-gradient(#fff, #eceaf0);
  ${(p) => p.$main && css`box-shadow: inset 0 -2px #e8b53c, inset 0 0 0 1px #f3d78c; border-color: #4b5a3c;`}
`;
const Cursor = styled.svg`position: absolute; left: 105px; top: 411px; pointer-events: none;`;

const Combo = ({ id, value }: { id: string; value: string }) => (
  <ComboBox>
    <ComboSelect id={id}><option>{value}</option></ComboSelect>
    <ComboArrow><Chevron dir="down" /></ComboArrow>
  </ComboBox>
);

const heightModes = [
  "Брать из указанной точки",
  "Брать только из геоточки или опорной точки",
  "Брать последнюю введенную",
  "Брать фиксированное значение отметки",
];

function BreaklineDialog() {
  const [xy, setXy] = useState(0);
  const [z, setZ] = useState(4);
  const [keep, setKeep] = useState(false);
  const [show, setShow] = useState(true);
  return (
    <Dialog onSubmit={(e) => e.preventDefault()}>
      <DialogTitle>
        <Icon name="win" size={15} />
        Параметры ввода структурной линии
        <CloseButton type="button" aria-label="Закрыть">
          <Svg width="12" height="12" viewBox="0 0 12 12" stroke="#fff" strokeWidth="2"><path d="M2 2l8 8M10 2l-8 8" /></Svg>
        </CloseButton>
      </DialogTitle>
      <DialogBody>
        <Caption htmlFor="surface">Объекты будут добавлены в поверхность:</Caption>
        <Line $h={20}><Combo id="surface" value="Поверхность1" /></Line>
        <Line $h={19} $top={4}>
          <FieldName htmlFor="desc" $w={68}>Описание:</FieldName>
          <TextBox id="desc" defaultValue="подпорная стенка" />
        </Line>
        <Line $h={20} $top={4}>
          <FieldName htmlFor="shift" $w={118}>Сдвиг линии разрыва:</FieldName>
          <Combo id="shift" value="Влево" />
        </Line>
        <FieldGroup>
          <Legend>Способ получения координат X и Y</Legend>
          {heightModes.slice(0, 2).map((t, i) => (
            <Choice key={t} $h={19}><Radio type="radio" name="xy" checked={xy === i} onChange={() => setXy(i)} />{t}</Choice>
          ))}
        </FieldGroup>
        <FieldGroup>
          <Legend>Способ получения отметки</Legend>
          <Line $h={4} />
          {heightModes.map((t, i) => (
            <Choice key={t} $h={20} $off={i === 1}>
              <Radio type="radio" name="z" disabled={i === 1} checked={z === i} onChange={() => setZ(i)} />{t}
            </Choice>
          ))}
          <Line $h={18} $left={16}>
            <FieldName htmlFor="zval" $w={108} $off>Значение отметки:</FieldName>
            <Spinner>
              <SpinInput id="zval" disabled defaultValue="37.00" />
              <SpinArrows><Chevron dir="up" color="#c9c3c3" /><Chevron dir="down" color="#c9c3c3" /></SpinArrows>
            </Spinner>
          </Line>
          <Line $h={20} $top={5}>
            <Choice $h={20}><Radio type="radio" name="z" checked={z === 4} onChange={() => setZ(4)} />Брать по поверхности</Choice>
          </Line>
          <Line $h={20} $top={2} $left={16}>
            <FieldName htmlFor="zsurf" $w={75}>Поверхность:</FieldName>
            <Combo id="zsurf" value="Поверхность1" />
          </Line>
          <Line $h={20} $top={4}>
            <Choice $h={20}><Check type="checkbox" checked={keep} onChange={() => setKeep(!keep)} />Сохранять значение разности отметок:</Choice>
            <Space $grow={1} />
            <TextBox $w={81} disabled defaultValue="0.00" aria-label="Разность отметок" />
          </Line>
        </FieldGroup>
        <Choice $h={20}><Check type="checkbox" checked={show} onChange={() => setShow(!show)} />Выводить значение отметки для корректирования</Choice>
        <Actions>
          <Action $main>Да</Action>
          <Action type="button">Отмена</Action>
          <Action type="button">Помощь</Action>
        </Actions>
      </DialogBody>
      <Cursor width="12" height="19" viewBox="0 0 12 19"><path d="M1 1v14l3-3 3 6 2-1-3-6h5z" fill="#fff" stroke="#000" /></Cursor>
    </Dialog>
  );
}

/* ---------- terrain model: triangulated from survey points ---------- */

type Pt = [number, number];
const survey: Pt[] = [
  [345,57],[443,63],[514,71],[568,78],[684,80],[778,76],[860,76],[-160,48],[-100,60],
  [28,92],[82,92],[152,90],[203,96],[283,102],[349,121],[410,129],
  [10,128],[60,125],[113,125],[165,127],[224,144],[304,163],[353,180],[411,204],[475,150],[568,163],[668,170],[737,178],[808,181],[860,178],
  [10,187],[60,178],[100,178],[155,183],[215,205],[276,225],[322,247],[472,235],
  [14,228],[35,225],[92,228],[142,232],[194,245],[240,255],[285,278],[522,262],[584,282],[627,293],[691,307],[765,318],[821,325],[860,325],
  [12,258],[65,250],[88,255],[127,265],[180,272],[226,293],[328,300],[372,280],[418,312],
  [10,290],[37,287],[80,280],[131,296],[184,312],[226,335],[272,322],[324,350],[373,328],
  [38,315],[80,320],[125,335],[165,352],[210,385],[271,362],[305,393],[415,362],[476,353],[522,394],[587,422],[657,437],[717,444],[786,452],[830,458],[860,490],
  [10,325],[62,345],[100,355],[140,380],[185,408],[105,398],[247,422],[357,393],[438,410],[343,433],
  [15,365],[155,444],[220,452],[278,462],[397,446],[474,446],
  [185,506],[245,495],[313,513],[372,478],[435,510],[519,490],[553,524],[600,538],[672,545],[726,567],
  [264,552],[332,565],[393,538],[455,553],[412,604],[487,573],[528,592],[565,618],
  [190,598],[270,632],[363,662],[435,642],[598,682],[757,620],[-150,543],[-150,578],[-150,620],[-100,668],[-100,697],
  [178,686],[268,703],[370,738],[452,696],[463,758],[606,734],[768,705],[768,785],[768,855],
  [140,772],[258,763],[352,823],[243,817],[455,827],[602,817],[86,830],[210,865],[325,884],[441,882],[575,905],[743,930],[860,1013],
  [25,865],[47,923],[86,912],[157,897],[248,940],[290,915],[401,938],[545,957],[710,1005],
  [10,930],[38,970],[98,958],[177,954],[352,982],[10,980],[122,1005],[177,1002],[253,1005],[310,1000],[469,1012],[435,1026],[375,1038],
  [57,1022],[10,1035],[107,1050],[168,1037],[237,1043],[305,1043],[47,1078],[10,1088],[162,1100],[112,1112],[247,1108],[333,1123],[404,1126],[468,1128],
  [548,1123],[595,1100],[655,1063],[802,1125],[853,1050],[68,1143],[28,1168],[142,1178],[215,1183],[94,1205],[318,1208],[388,1225],[475,1235],
  [548,1243],[607,1230],[689,1210],[752,1173],[848,1225],[790,1282],[62,1243],[25,1267],[8,1230],
  [165,1315],[222,1315],[98,1328],[295,1328],[345,1343],[432,1350],[501,1363],[586,1360],[667,1345],[722,1323],[835,1366],[862,1345],[75,1348],[35,1362],
  [-852,1368],[-782,1360],[-670,1348],[-630,1342],[-590,1330],[-365,1368],[-298,1350],[-230,1322],[-100,1363],
  [-900,1270],[-840,1240],[-770,1260],[-690,1240],[-560,1290],[-470,1250],[-350,1240],[-320,1270],[-160,1270],[-130,1250],[-90,1220],[-40,1240],[-20,1290],
];

function triangulate(points: Pt[]): [Pt, Pt][] {
  const pts: Pt[] = [...points, [-20000, -20000], [20000, -20000], [0, 30000]];
  const n = points.length;
  const circle = (a: number, b: number, c: number) => {
    const [ax, ay] = pts[a], [bx, by] = pts[b], [cx, cy] = pts[c];
    const d = 2 * (ax * (by - cy) + bx * (cy - ay) + cx * (ay - by)) || 1e-9;
    const A = ax * ax + ay * ay, B = bx * bx + by * by, C = cx * cx + cy * cy;
    const x = (A * (by - cy) + B * (cy - ay) + C * (ay - by)) / d;
    const y = (A * (cx - bx) + B * (ax - cx) + C * (bx - ax)) / d;
    return { v: [a, b, c], x, y, r: (ax - x) ** 2 + (ay - y) ** 2 };
  };
  let tris = [circle(n, n + 1, n + 2)];
  for (let i = 0; i < n; i++) {
    const open = new Map<string, [number, number]>();
    tris = tris.filter((t) => {
      if ((pts[i][0] - t.x) ** 2 + (pts[i][1] - t.y) ** 2 >= t.r) return true;
      for (let k = 0; k < 3; k++) {
        const a = t.v[k], b = t.v[(k + 1) % 3];
        const key = Math.min(a, b) + "-" + Math.max(a, b);
        if (open.has(key)) open.delete(key);
        else open.set(key, [a, b]);
      }
      return false;
    });
    open.forEach(([a, b]) => tris.push(circle(a, b, i)));
  }
  const edges = new Map<string, [Pt, Pt]>();
  tris.forEach((t) => {
    for (let k = 0; k < 3; k++) {
      const a = t.v[k], b = t.v[(k + 1) % 3];
      if (a >= n || b >= n) continue;
      if (Math.hypot(pts[a][0] - pts[b][0], pts[a][1] - pts[b][1]) > 515) continue;
      edges.set(Math.min(a, b) + "-" + Math.max(a, b), [pts[a], pts[b]]);
    }
  });
  return [...edges.values()];
}

const meshPath = triangulate(survey).map(([a, b]) => `M${a[0]} ${a[1]}L${b[0]} ${b[1]}`).join("");
const ridges =
  "M-160 54L345 57M-160 40L152 90L345 57M-20 62L203 96L345 57M8 385L155 444M-852 1368L-670 1348L-365 1368L-100 1363L80 1350L222 1340L432 1350M-630 1342L-365 1368M80 1346L165 1322L345 1343M35 1362L835 1366M80 1350Q200 1325 345 1350L501 1363M667 1345L835 1366M586 1360L700 1348";

function Drawing() {
  return (
    <Model viewBox="-963 3 1830 1413" preserveAspectRatio="xMinYMin slice" fill="none" stroke="#1c1a1e" strokeWidth="2.500" aria-label="Модель рельефа">
      <path d={meshPath} />
      <path d={ridges} />
      <path d="M150 1352h160v8h-160z" fill="#777" stroke="none" />
      <path d="M-923 1200V1360M-935 1361h24v24h-24zM-935 1373H-780M-923 1361v24M-788 1360l28 13-28 13zM-732 1356l32 34M-700 1356l-32 34" />
    </Model>
  );
}

/* ---------- content ---------- */

const menu1 = [
  ["Файл", "Правка", "Вид", "Вставка", "Формат", "Сервис", "Рисование", "Размеры", "Редактировать"],
  ["GeoniCS", "Топознаки", "Геоточки", "Рельеф", "Горизонтальная"],
];
const menu2 = [
  ["Вертикальная", "Благоустройство", "Сети", "Геометрия", "Трассы", "Профиль"],
  ["Утилиты", "Окно", "Справка"],
];
const std1 = [["new", "open", "save"], ["print", "preview", "publish", "dwf"], ["cut", "copy", "paste", "match", "block"]];
const std2 = [["pan", "zoom", "zoomWin", "zoomPrev"], ["props", "center", "palettes", "sheetset", "markup", "calc"]];
const drawTools = ["line", "xline", "pline", "polygon", "rect", "arc", "circle", "cloud", "spline", "ellipse", "ellArc", "insert", "make", "point", "hatch", "gradient", "region", "table", "mtext"];
const modifyTools = ["erase", "copyObj", "mirror", "offset", "array", "move", "rotate", "scale", "stretch", "trim", "extend", "breakPt", "breakAt", "join", "chamfer", "fillet", "explode"];
const orderTools = ["order1", "order2", "order3", "order4"];
const sideTabs = ["GeoniCS", "Ситуация", "Рельеф", "Генплан", "Сети", "Трассы", "Профиль", "Утилиты"];
const modes: [string, boolean][] = [["infer", true], ["snap", false], ["grid", false], ["ortho", false], ["polar", true], ["osnap", true], ["otrack", true], ["ducs", true], ["dyn", true], ["lwt", false], ["calc", false]];

type Item = { d: number; icon: string; t: string; x?: "+" | "-"; on?: boolean };
const tree: Item[] = [
  { d: 0, icon: "folder", t: "Геоточки", x: "+" },
  { d: 0, icon: "folderOpen", t: "Рельеф", x: "-" },
  { d: 1, icon: "tSettings", t: "Установки Поверхностей" },
  { d: 1, icon: "tSet", t: "Установить текущую поверхность" },
  { d: 1, icon: "tSave", t: "Сохранить текущую поверхность" },
  { d: 1, icon: "tShow", t: "Показать текущую поверхность" },
  { d: 1, icon: "tLayer", t: "Вкл/Откл слой текущей поверхности" },
  { d: 1, icon: "tBuild", t: "Построить поверхность" },
  { d: 1, icon: "tEdit", t: "Редактор" },
  { d: 1, icon: "tMove", t: "Передвинуть поверхность" },
  { d: 1, icon: "tScale", t: "Масштабировать поверхность" },
  { d: 1, icon: "folderOpen", t: "Структурные линии", x: "-" },
  { d: 2, icon: "sApply", t: "Применить структурные линии" },
  { d: 2, icon: "sSoft", t: "Отрисовать мягкие стр. линии" },
  { d: 2, icon: "sSoft", t: "Отрисовать интерполируемые брей" },
  { d: 2, icon: "sHard", t: "Отрисовать твердые стр. линии" },
  { d: 2, icon: "sBreak", t: "Отрисовать линии разрыва", on: true },
  { d: 2, icon: "sDraw", t: "Определить из чертежа" },
  { d: 2, icon: "sFile", t: "Определить из файла" },
  { d: 2, icon: "sId", t: "ID структурной линии" },
  { d: 2, icon: "sInsert", t: "Вставить в чертеж" },
  { d: 2, icon: "sList", t: "Список структурных линий" },
  { d: 2, icon: "sRaise", t: "Поднять на поверхность" },
  { d: 2, icon: "sUpdate", t: "Обновить структурные линии" },
  { d: 2, icon: "sShift", t: "Смещение" },
  { d: 2, icon: "sJoin", t: "Объединение" },
  { d: 2, icon: "sQuick", t: "Быстрое удаление" },
  { d: 2, icon: "sDelete", t: "Удалить структурные линии" },
  { d: 2, icon: "sExport", t: "Экспорт в файл" },
  { d: 1, icon: "folder", t: "Границы", x: "+" },
  { d: 1, icon: "folder", t: "Отображение", x: "+" },
  { d: 1, icon: "folder", t: "Утилиты для поверхности", x: "+" },
  { d: 1, icon: "folder", t: "Сечения", x: "+" },
];

const Tools = ({ names }: { names: string[] }) => (
  <>{names.map((n) => <ToolButton key={n} aria-label={n}><Icon name={n} /></ToolButton>)}</>
);
const MenuItems = ({ items }: { items: string[] }) => <>{items.map((m) => <MenuItem key={m}>{m}</MenuItem>)}</>;

const controlShapes = ["M2 8h9v2H2z", "M4.500 3V1.500h6v7H9M2 3.500h6.500v7H2zM4 6h2.500v2H4z", "M2 2l8 8M10 2l-8 8"];
const Controls = ({ color }: { color: string }) => (
  <>
    {controlShapes.map((d, i) => (
      <PlainButton key={d} $w={14} aria-label={["Свернуть", "Восстановить", "Закрыть"][i]}>
        <Svg width="13" height="13" viewBox="0 0 13 13" fill="none">
          <path d={d} stroke={color} strokeWidth={i === 2 ? 4 : 3} />
          <path d={d} stroke="#fff" strokeWidth={i === 2 ? 2 : 1} fill={i === 0 ? "#fff" : "none"} />
        </Svg>
      </PlainButton>
    ))}
  </>
);

export default function App() {
  const [tab, setTab] = useState("Рельеф");
  return (
    <Page>
      <Global />
      <Window>
        <Header>
          <AppButton aria-label="Меню приложения">
            <Svg width="31" height="45" viewBox="0 0 31 45">
              <path d="M9 4l9-2 2 2 8 28-8 4-3-7-7 1-2 7-6-4z" fill="#7d0c10" />
              <path d="M8 3h8l7 29-6 3-3-8-6 1-2 7-5-3zM11 11L9 23l5-1z" fill="#e22d2f" fillRule="evenodd" />
              <path d="M8 3h8l2 8-4 3-3-3-3 5-3 3z" fill="#ee5a50" opacity=".5" />
              <path d="M23 38h7l-3.500 4z" fill="#000" />
            </Svg>
          </AppButton>
          <div>
            <TitleBar>
              <QuickBar>
                {["new", "open", "save", "print", "undo", "redo"].map((n) => <PlainButton key={n} aria-label={n}><Icon name={n} /></PlainButton>)}
              </QuickBar>
              <Title>GeoniCS 2009 [Проект: pr1] <b>Чертеж1.dwg</b></Title>
              <SearchArrow>►</SearchArrow>
              <Search placeholder="Введите ключевое слово или фразу" aria-label="Поиск" />
              <SearchButton $w={24} aria-label="Найти"><Icon name="zoom" size={14} /></SearchButton>
              <SearchButton $w={8} aria-label="Параметры поиска">▼</SearchButton>
              <SearchButton $w={22} aria-label="Связь"><Icon name="sat" size={14} /></SearchButton>
              <SearchButton $w={22} aria-label="Избранное"><Icon name="star" size={14} /></SearchButton>
              <WinControls><Controls color="#333" /></WinControls>
            </TitleBar>
            <MenuRow $start={12}>
              <MenuGroup $gap={20} $after={17}><MenuItems items={menu1[0]} /></MenuGroup>
              <MenuGroup $gap={13}><MenuItems items={menu1[1]} /></MenuGroup>
              <WinControls><Controls color="#77727f" /></WinControls>
            </MenuRow>
            <MenuRow $start={8}>
              <MenuGroup $gap={13} $after={15}><MenuItems items={menu2[0]} /></MenuGroup>
              <MenuGroup $gap={18}><MenuItems items={menu2[1]} /></MenuGroup>
            </MenuRow>
          </div>
        </Header>

        <ToolRow>
          <Handle />
          <ToolStrip>
            {std1.map((g) => <React.Fragment key={g[0]}><Tools names={g} /><Sep /></React.Fragment>)}
            <Tools names={["arcL"]} /><Drop aria-label="Список отмены">▼</Drop>
            <Tools names={["arcR"]} /><Drop aria-label="Список возврата">▼</Drop>
            <Sep />
            {std2.map((g) => <React.Fragment key={g[0]}><Tools names={g} /><Sep /></React.Fragment>)}
            <Tools names={["help"]} />
          </ToolStrip>
          <Handle />
          <ToolStrip $grow>
            <Tools names={["textStyle"]} />
            <FlatCombo w={111} text="Standard" indent={12} label="Стиль текста" />
            <Sep />
            <Tools names={["dimStyle"]} />
            <FlatCombo w={112} text="ISO-25" indent={12} label="Размерный стиль" />
            <Sep />
            <Tools names={["tableStyle"]} />
            <FlatCombo w={111} text="Standard" indent={0} label="Стиль таблиц" />
          </ToolStrip>
        </ToolRow>
        <ToolRow>
          <Handle />
          <ToolStrip>
            <Tools names={["layerProps"]} />
            <FlatCombo w={281} text="R_Поверхность1_222" indent={0} label="Слой">
              {["bulb", "sun", "freeze", "lock", "black"].map((n) => <Icon key={n} name={n} />)}
            </FlatCombo>
            <Tools names={["layerCur", "layerPrev", "layerState"]} />
          </ToolStrip>
          <Handle />
          <ToolStrip>
            <FlatCombo w={140} text="Послою" indent={0} label="Цвет"><Icon name="black" /></FlatCombo>
            <Sep /><Sep />
            <FlatCombo w={148} text="Послою" label="Тип линий"><LineSample $w={56} /></FlatCombo>
            <Sep /><Sep />
            <FlatCombo w={115} text="Послою" label="Вес линий"><LineSample $w={32} /></FlatCombo>
            <Sep /><Sep />
            <FlatCombo w={112} text="Поцвету" label="Стиль печати" />
          </ToolStrip>
        </ToolRow>

        <Body>
          <Navigator>
            <NavTitle><Handle />Навигатор GeoniCS</NavTitle>
            <NavRow>
              <TreePanel>
                <Tree role="tree" aria-label="Навигатор">
                  {tree.map((it, i) => (
                    <TreeRow key={i} role="treeitem" aria-level={it.d + 1}>
                      {it.d > 0 && <Branch />}
                      {it.d > 1 && <Branch $line />}
                      <Branch $line={it.d > 0} $tick>
                        {it.x && (
                          <Expander aria-label={it.x === "+" ? "Развернуть" : "Свернуть"}>
                            <Svg width="7" height="7" viewBox="0 0 7 7" stroke="#000"><path d={it.x === "+" ? "M1 3.500h5M3.500 1v5" : "M1 3.500h5"} /></Svg>
                          </Expander>
                        )}
                      </Branch>
                      <Icon name={it.icon} />
                      <TreeLabel $active={it.on}>{it.t}</TreeLabel>
                    </TreeRow>
                  ))}
                </Tree>
                <VScroll>
                  <ScrollButton aria-label="Вверх"><Chevron dir="up" /></ScrollButton>
                  <Thumb $v $grow={89} />
                  <Space $grow={11} />
                  <ScrollButton aria-label="Вниз"><Chevron dir="down" /></ScrollButton>
                </VScroll>
                <HScroll>
                  <ScrollButton aria-label="Влево"><Chevron dir="left" /></ScrollButton>
                  <Thumb $grow={76} />
                  <Space $grow={24} />
                  <ScrollButton aria-label="Вправо"><Chevron dir="right" /></ScrollButton>
                </HScroll>
                <Corner />
              </TreePanel>
              <SideTabs>
                {sideTabs.map((t) => <SideTab key={t} $active={t === tab} onClick={() => setTab(t)}>{t}</SideTab>)}
              </SideTabs>
            </NavRow>
          </Navigator>

          <Work>
            <WorkTop>
              <VTools $h={399}>
                <Handle $across />
                {drawTools.map((n) => <VTool key={n} aria-label={n}><Icon name={n} /></VTool>)}
              </VTools>
              <View>
                <Drawing />
                <ViewBar>
                  <ViewButton $w={48}><Icon name="anno" size={15} />1:1</ViewButton>
                  <ViewButton $w={21} aria-label="Видимость аннотаций"><Icon name="annoLit" /></ViewButton>
                  <ViewButton $w={20} aria-label="Автомасштаб"><Icon name="annoOff" /></ViewButton>
                  <ViewButton $w={11} $gap aria-label="Меню строки">▾</ViewButton>
                </ViewBar>
                <BreaklineDialog />
              </View>
              <RightTools>
                <VTools $h={358}>
                  <Handle $across />
                  {modifyTools.map((n) => <VTool key={n} aria-label={n}><Icon name={n} /></VTool>)}
                </VTools>
                <VTools $h={92}>
                  <Handle $across />
                  {orderTools.map((n) => <VTool key={n} aria-label={n}><Icon name={n} /></VTool>)}
                </VTools>
              </RightTools>
            </WorkTop>
            <Command>
              <CommandGrip />
              <CommandLog>{"Команда:\nЗадать линии разрыва."}</CommandLog>
              <CommandScroll>
                <ScrollButton aria-label="Вверх"><Chevron dir="up" /></ScrollButton>
                <ScrollButton aria-label="Вниз"><Chevron dir="down" /></ScrollButton>
              </CommandScroll>
              <CommandLine>
                <CommandInput aria-label="Командная строка" />
                <CommandHScroll>
                  <ScrollButton $h={12} aria-label="Влево"><Chevron dir="left" /></ScrollButton>
                  <Thumb $grow={1} />
                  <Space $grow={1} />
                  <ScrollButton $h={12} aria-label="Вправо"><Chevron dir="right" /></ScrollButton>
                  <Space $grow={1} />
                </CommandHScroll>
              </CommandLine>
            </Command>
          </Work>
        </Body>

        <Status>
          <Coords>{"68.83,  58.44, 0.00"}</Coords>
          <Group>{modes.map(([n, on]) => <StatusButton key={n} $on={on} aria-label={n}><Icon name={n} size={14} /></StatusButton>)}</Group>
          <Group $push>
            {["model", "layout", "layout2", "quick"].map((n, i) => <StatusButton key={n} $on={i === 0} aria-label={n}><Icon name={n} /></StatusButton>)}
          </Group>
          <Group $gap={11}>
            {["pan", "zoom", "wheel", "motion"].map((n) => <StatusButton key={n} aria-label={n}><Icon name={n} /></StatusButton>)}
          </Group>
          <Group $gap={16}>
            {["gear", "unlock"].map((n) => <StatusButton key={n} aria-label={n}><Icon name={n} /></StatusButton>)}
            <StatusButton $w={12} aria-label="Меню состояния">▼</StatusButton>
            <StatusButton aria-label="Очистить экран"><Icon name="clean" /></StatusButton>
          </Group>
        </Status>
      </Window>
    </Page>
  );
}
